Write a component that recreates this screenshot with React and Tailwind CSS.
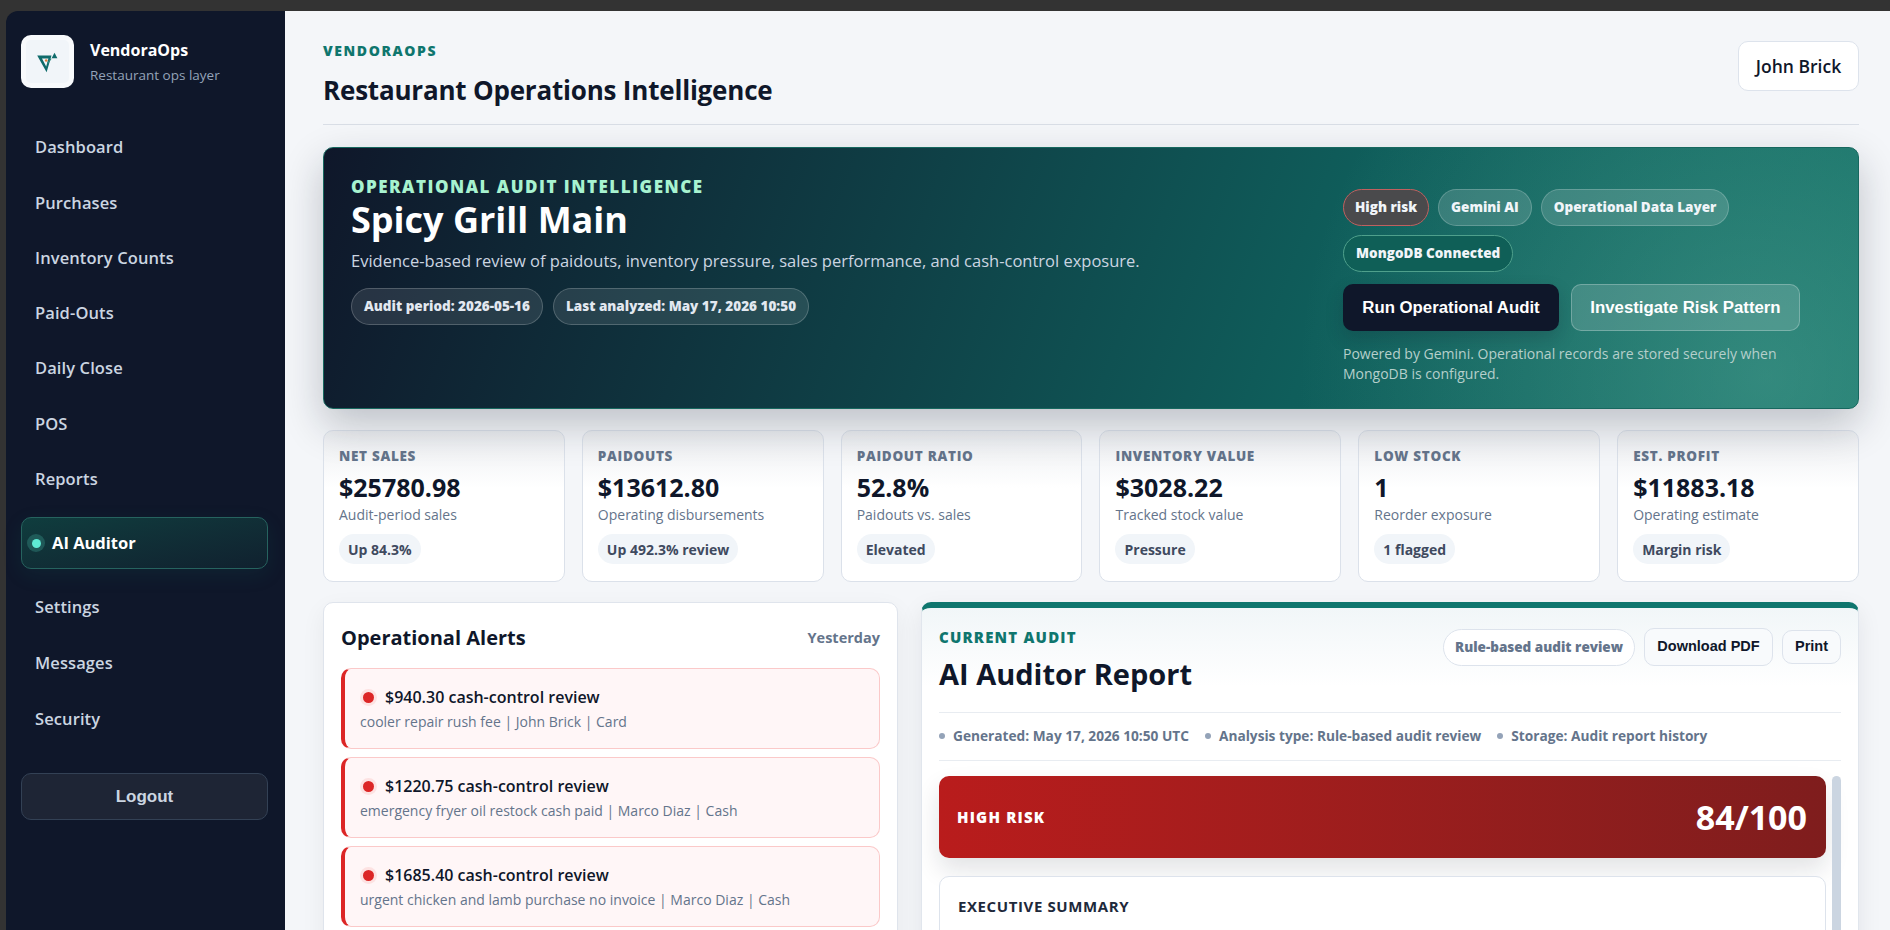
import React from "react";
const nav1 = ["Dashboard","Purchases","Inventory Counts","Paid-Outs","Daily Close","POS","Reports"];
const nav2 = ["Settings","Messages","Security"];
const kpis = [
 ["NET SALES","$25780.98","Audit-period sales","Up 84.3%"],
 ["PAIDOUTS","$13612.80","Operating disbursements","Up 492.3% review"],
 ["PAIDOUT RATIO","52.8%","Paidouts vs. sales","Elevated"],
 ["INVENTORY VALUE","$3028.22","Tracked stock value","Pressure"],
 ["LOW STOCK","1","Reorder exposure","1 flagged"],
 ["EST. PROFIT","$11883.18","Operating estimate","Margin risk"],
];
const alerts = [
 ["$940.30 cash-control review","cooler repair rush fee | John Brick | Card"],
 ["$1220.75 cash-control review","emergency fryer oil restock cash paid | Marco Diaz | Cash"],
 ["$1685.40 cash-control review","urgent chicken and lamb purchase no invoice | Marco Diaz | Cash"],
];
const Logo = () => (
  <svg width="24" height="24" viewBox="0 0 24 24">
    <path d="M1.2 5.5 H15.5 L10.6 22.3 Z M6 8.4 L10.2 16.6 L12.4 8.4 Z" fill="#0f6b6b" fillRule="evenodd"/>
    <path d="M18.5 2.8 L21.4 8.2 H15.6 Z" fill="#0f6b6b"/>
    <path d="M11 13 L14.5 8.4 L15.6 8.8 L12 14 Z" fill="#2c8a7f"/>
    <circle cx="10.2" cy="10.5" r="1.3" fill="#e07b39"/>
  </svg>
);
export default function App(){
 return (
  <div className="h-[930px] w-[1890px] overflow-hidden bg-[#333333] pt-[11px] pl-[6px] font-['Open_Sans','Noto_Sans',sans-serif]">
   <div className="flex h-[919px]">
    <aside className="w-[279px] shrink-0 rounded-tl-[12px] bg-[#0f172a] pl-[15px] pr-[17px] pt-[24px]">
      <div className="flex items-center gap-4">
        <div className="flex h-[53px] w-[53px] items-center justify-center rounded-[10px] border-[5px] border-[#f8fafc] bg-[#f1f5f9]"><Logo/></div>
        <div>
          <div className="mt-[1px] text-[16px] font-bold leading-[20px] text-white">VendoraOps</div>
          <div className="mt-[6px] text-[13.5px] leading-[18px] text-[#94a3b8]">Restaurant ops layer</div>
        </div>
      </div>
      <nav className="mt-[32px] flex flex-col">
        {nav1.map(n=><div key={n} className="flex h-[55.3px] items-center px-[14px] text-[16.5px] font-semibold tracking-[0.1px] text-[#cbd5e1]">{n}</div>)}
        <div className="mt-[10px] flex h-[52px] items-center gap-[7px] rounded-[10px] border border-[#26635f] bg-gradient-to-br from-[#0f3d3e] to-[#10212f] pl-[5px] text-[16.5px] font-bold text-white shadow-[0_6px_20px_rgba(20,120,110,0.12)]">
          <span className="flex h-[18px] w-[18px] items-center justify-center rounded-full bg-[#5eead4]/20"><span className="h-[9px] w-[9px] rounded-full bg-[#5eead4]"/></span>AI Auditor
        </div>
        <div className="mt-[10px]"/>
        {nav2.map(n=><div key={n} className="flex h-[56px] items-center px-[14px] text-[16.5px] font-semibold tracking-[0.1px] text-[#cbd5e1]">{n}</div>)}
      </nav>
      <button className="mt-[26px] h-[47px] w-full rounded-[10px] border border-[#334155] bg-[#1e2535] font-['Liberation_Sans',sans-serif] text-[17px] font-semibold text-[#cbd5e1]">Logout</button>
    </aside>
    <main className="min-w-0 flex-1 bg-[#f4f6f9] pl-[38px] pr-[31px]">
      <header className="flex h-[114px] items-start justify-between border-b border-[#d9dee6]">
        <div className="pt-[31px]">
          <div className="text-[14px] font-extrabold leading-[18px] tracking-[1.6px] text-[#0f766e]">VENDORAOPS</div>
          <h1 className="mt-[12px] text-[26px] font-bold leading-[36px] tracking-[-0.2px] text-[#0f172a]">Restaurant Operations Intelligence</h1>
        </div>
        <div className="mt-[30px] flex h-[50px] w-[121px] items-center justify-center rounded-[10px] border border-[#dde3ec] bg-white text-[17.5px] font-semibold text-[#0f172a]">John Brick</div>
      </header>
      <section className="relative mt-[22px] flex h-[262px] rounded-[10px] border border-[#17685f] bg-[radial-gradient(circle_at_94%_88%,rgba(90,170,155,0.45)_0%,rgba(90,170,155,0)_32%),linear-gradient(110deg,#0f172a_0%,#0f5e5b_65%,#147267_100%)] pl-[27px] pt-[28px] shadow-[0_16px_40px_rgba(15,23,42,0.24)]">
        <div className="w-[992px]">
          <div className="mt-[1px] text-[17px] font-extrabold leading-[20px] tracking-[1.5px] text-[#a7f3d0]">OPERATIONAL AUDIT INTELLIGENCE</div>
          <h2 className="mt-[1px] text-[36px] font-bold leading-[44px] text-white">Spicy Grill Main</h2>
          <p className="mt-[7px] text-[16.5px] leading-[24px] text-[#cbd5e1]">Evidence-based review of paidouts, inventory pressure, sales performance, and cash-control exposure.</p>
          <div className="mt-[15px] flex gap-[10px]">
            <span className="flex h-[37px] items-center rounded-full border border-white/20 bg-white/10 px-[12px] text-[13.5px] font-extrabold text-[#e2e8f0]">Audit period: 2026-05-16</span>
            <span className="flex h-[37px] items-center rounded-full border border-white/20 bg-white/10 px-[12px] text-[13.5px] font-extrabold text-[#e2e8f0]">Last analyzed: May 17, 2026 10:50</span>
          </div>
        </div>
        <div className="w-[460px] pt-[13px]">
          <div className="flex flex-wrap gap-x-[9px] gap-y-[9px]">
            <span className="flex h-[37px] items-center rounded-full border border-[#c0605f] bg-[#4a4a4c] px-[11px] text-[13.5px] font-extrabold text-[#f1f5f9]">High risk</span>
            <span className="flex h-[37px] items-center rounded-full border border-white/20 bg-white/15 px-[12px] text-[13.5px] font-extrabold text-[#f1f5f9]">Gemini AI</span>
            <span className="flex h-[37px] items-center rounded-full border border-white/20 bg-white/15 px-[12px] text-[13.5px] font-extrabold text-[#f1f5f9]">Operational Data Layer</span>
            <span className="flex h-[37px] items-center rounded-full border border-[#4fa08c] bg-[#0f5f57] px-[12px] text-[13.5px] font-extrabold text-[#f1f5f9]">MongoDB Connected</span>
          </div>
          <div className="mt-[12px] flex gap-[12px]">
            <button className="h-[47px] w-[216px] rounded-[10px] bg-[#0f172a] font-['Liberation_Sans',sans-serif] text-[16.8px] font-bold text-white shadow-[0_8px_18px_rgba(15,23,42,0.2)]">Run Operational Audit</button>
            <button className="h-[47px] w-[229px] rounded-[10px] border border-white/25 bg-white/15 font-['Liberation_Sans',sans-serif] text-[16.8px] font-bold text-white">Investigate Risk Pattern</button>
          </div>
          <p className="mt-[13px] w-[440px] text-[14px] leading-[20px] text-[#b5cfcb]">Powered by Gemini. Operational records are stored securely when MongoDB is configured.</p>
        </div>
      </section>
      <section className="mt-[21px] grid grid-cols-6 gap-[17px]">
        {kpis.map(k=>(
          <div key={k[0]} className="h-[152px] rounded-[10px] border border-[#dbe1ea] bg-gradient-to-b from-[#eceef1] via-white via-[38%] to-white px-[15px] pt-[16px]">
            <div className="text-[13.5px] font-extrabold leading-[18px] tracking-[0.7px] text-[#64748b]">{k[0]}</div>
            <div className="mt-[5px] text-[25px] font-bold leading-[34px] text-[#0f172a]">{k[1]}</div>
            <div className="mt-[1px] text-[14px] leading-[20px] text-[#64748b]">{k[2]}</div>
            <span className="mt-[9px] inline-flex h-[30px] items-center rounded-full bg-[#f1f5f9] px-[9px] text-[14px] font-bold text-[#3f4a5f]">{k[3]}</span>
          </div>
        ))}
      </section>
      <section className="mt-[20px] flex h-[400px] gap-[23px]">
        <div className="h-[400px] w-[575px] shrink-0 rounded-[10px] border border-[#dfe4ec] bg-white px-[17px] pt-[17px] shadow-[0_8px_24px_rgba(15,23,42,0.06)]">
          <div className="flex h-[36px] items-center justify-between">
            <div className="text-[20px] font-bold text-[#0f172a]">Operational Alerts</div>
            <div className="text-[14.5px] font-bold text-[#64748b]">Yesterday</div>
          </div>
          <div className="mt-[12px] flex flex-col gap-[8px]">
            {alerts.map(a=>(
              <div key={a[0]} className="h-[81px] rounded-[10px] border border-[#fbc9c9] border-l-[4px] border-l-[#dc2626] bg-[#fff6f7] pl-[15px] pt-[18px]">
                <div className="flex items-center gap-[8px] text-[16px] font-semibold leading-[20px] text-[#0f172a]">
                  <span className="flex h-[17px] w-[17px] items-center justify-center rounded-full bg-[#fde2e2]"><span className="h-[11px] w-[11px] rounded-full bg-[#dc2626]"/></span>{a[0]}
                </div>
                <div className="mt-[5px] text-[14px] leading-[20px] text-[#64748b]">{a[1]}</div>
              </div>
            ))}
          </div>
        </div>
        <div className="h-[400px] min-w-0 flex-1 overflow-hidden rounded-[10px] border border-[#e1e6ed] border-t-[6px] border-t-[#0f766e] bg-gradient-to-b from-[#f1f6f8] via-white via-[20%] to-white px-[17px] pt-[20px] shadow-[0_8px_24px_rgba(15,23,42,0.08)]">
          <div className="flex items-start justify-between">
            <div>
              <div className="text-[15px] font-extrabold leading-[18px] tracking-[1.2px] text-[#0f766e]">CURRENT AUDIT</div>
              <h3 className="mt-[9px] text-[29px] font-bold leading-[38px] text-[#0f172a]">AI Auditor Report</h3>
            </div>
            <div className="flex items-center gap-[9px]">
              <span className="flex h-[37px] items-center rounded-full border border-[#dde3ec] bg-white px-[11px] text-[13.5px] font-extrabold text-[#64748b]">Rule-based audit review</span>
              <button className="h-[38px] w-[129px] rounded-[10px] border border-[#dde3ec] bg-[#f8fafc] font-['Liberation_Sans',sans-serif] text-[14.5px] font-semibold text-[#0f172a]">Download PDF</button>
              <button className="h-[34px] w-[59px] rounded-[10px] border border-[#dde3ec] bg-[#f8fafc] font-['Liberation_Sans',sans-serif] text-[14.5px] font-semibold text-[#0f172a]">Print</button>
            </div>
          </div>
          <div className="mt-[19px] flex h-[49px] items-center gap-[16px] border-y border-[#e8ecf1] text-[13.7px] font-bold text-[#64748b]">
            {["Generated: May 17, 2026 10:50 UTC","Analysis type: Rule-based audit review","Storage: Audit report history"].map(t=><span key={t} className="flex items-center gap-[8px]"><span className="h-[6px] w-[6px] rounded-full bg-[#94a3b8]"/>{t}</span>)}
          </div>
          <div className="mt-[15px] flex gap-[6px]">
            <div className="min-w-0 flex-1">
              <div className="flex h-[82px] items-center justify-between rounded-[10px] bg-gradient-to-r from-[#b91c1c] to-[#7f1d1d] pl-[18px] pr-[19px] text-white shadow-[0_12px_24px_rgba(15,23,42,0.12)]">
                <span className="text-[15px] font-extrabold tracking-[1.2px]">HIGH RISK</span>
                <span className="text-[34px] font-bold">84/100</span>
              </div>
              <div className="mt-[18px] h-[200px] rounded-[10px] border border-[#dde3ec] bg-white px-[18px] pt-[18px]">
                <div className="text-[15px] font-bold tracking-[0.6px] text-[#1e293b]">EXECUTIVE SUMMARY</div>
                <p className="mt-[11px] text-[15px] leading-[24px] text-[#334155]">Spicy Grill Main shows elevated cash-control risk for the audit period, with paidouts reaching 52.8% of net sales.</p>
              </div>
            </div>
            <div className="h-[300px] w-[9px] shrink-0 rounded-full bg-[#cbd5e1]"/>
          </div>
        </div>
      </section>
    </main>
   </div>
  </div>
 );
}
